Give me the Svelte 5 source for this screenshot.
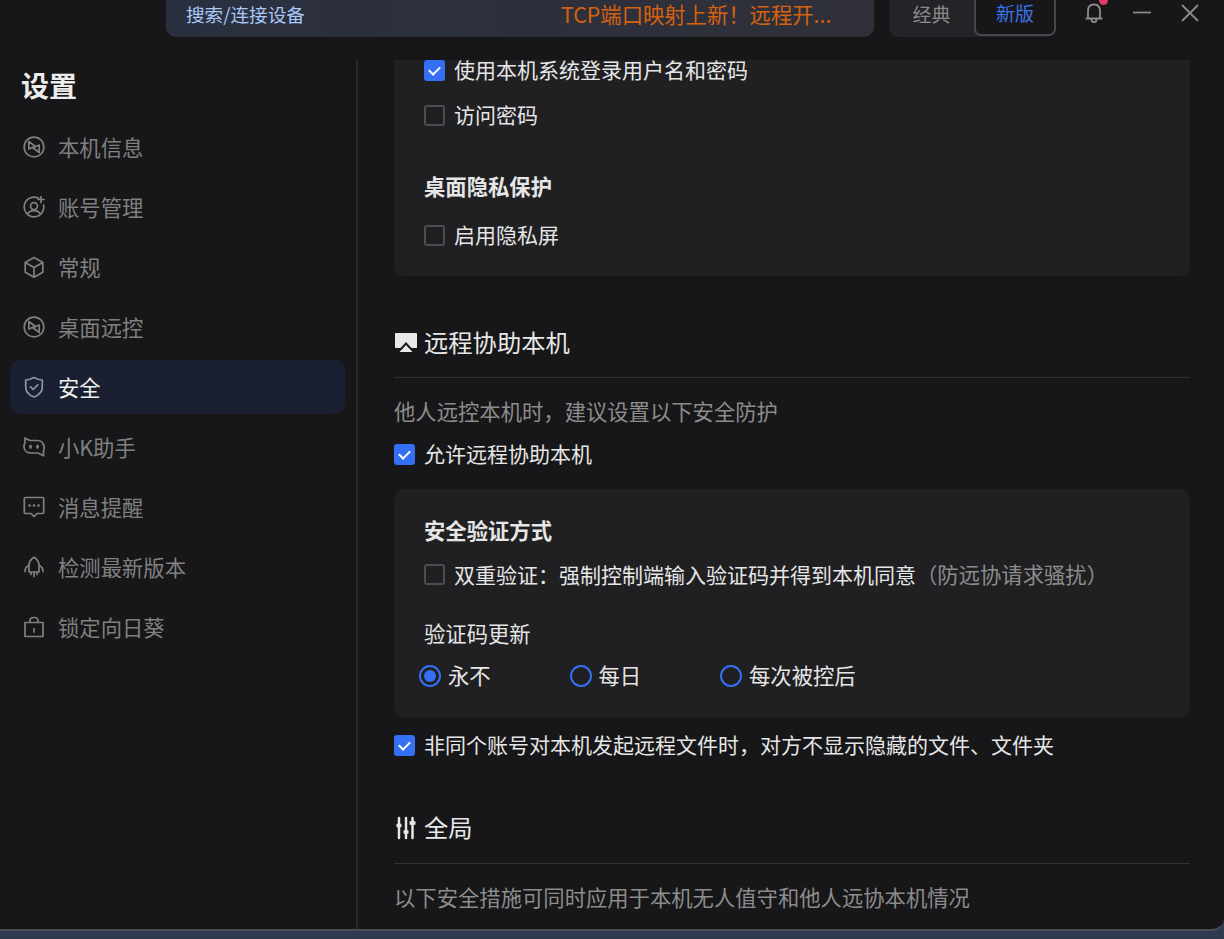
<script>
  const logo = "M11 1.200c5.600 0 9.800 4.200 9.800 9.800s-4.200 9.800-9.800 9.800S1.200 16.600 1.200 11 5.400 1.200 11 1.200ZM5.800 5.500v7.500l6.400-2.800ZM16.200 16.500V9l-6.400 2.800Z";
  const menu = [
    { label: "本机信息", d: logo },
    { label: "账号管理", d: "M15.500 2.300A9.800 9.800 0 1 0 20.600 9M11 6.600a3.500 3.500 0 1 1 0 7a3.500 3.500 0 1 1 0-7ZM4.600 18c1.200-2.400 3.500-3.400 6.400-3.400s5.200 1 6.400 3.400M18 .5v6M15 3.500h6" },
    { label: "常规", d: "M11 1.500l8.800 5v9.800l-8.800 5l-8.800-5V6.500ZM2.200 6.500l8.800 5l8.800-5M11 11.500v9.800" },
    { label: "桌面远控", d: logo },
    { label: "安全", d: "M11 1.500c2.600 1.500 5.200 2.300 8.300 2.500v7c0 5-3.400 8.200-8.300 10c-4.900-1.800-8.300-5-8.300-10V4c3.100-.2 5.700-1 8.300-2.500ZM7.500 10.800l2.700 2.700l4.500-4.700", active: true },
    { label: "小K助手", d: "M2 2v4.500C1.300 7.700 1 9 1 10.500c0 4 2.700 6.500 6.500 6.500h7.500l5.500 2.800V15c.6-1.200 .8-2.800 .5-4.500C20.400 6.800 18 4.500 14.500 4.500h-7C5.500 4.500 4 3 2 2Z", dots: "M7.500 10v1.500M14.500 10v1.500" },
    { label: "消息提醒", d: "M2.500 1.500h17c.7 0 1.200 .5 1.200 1.200v13.600c0 .7-.5 1.200-1.200 1.200h-5.500L11 20.500l-3-3h-5.500c-.7 0-1.200-.5-1.200-1.200V2.700c0-.7 .5-1.200 1.200-1.200Z", dots: "M6.500 9.500h.1M11 9.500h.1M15.500 9.500h.1" },
    { label: "检测最新版本", d: "M11 1.200c3.600 2 5 5 5 8.300v6.500H6V9.500c0-3.300 1.400-6.300 5-8.300ZM6 9.500C3.500 10.500 2 12.500 2 15.500M16 9.500c2.500 1 4 3 4 6M8 16v2.500M11 16v4.500M14 16v2.500" },
    { label: "锁定向日葵", d: "M2 6.500h18v14H2ZM7 6.500V4.500C7 2.500 8.500 1.500 11 1.500s4 1 4 3v2M11 12.500v3.500" },
  ];
</script>

<div class="window">
  <header class="topbar">
    <div class="search">
      <span class="search-text">搜索/连接设备</span>
      <span class="promo">TCP端口映射上新！远程开...</span>
    </div>
    <div class="tabs">
      <span class="tab">经典</span>
      <span class="tab current">新版</span>
    </div>
    <div class="bell">
      <svg width="22" height="24" viewBox="0 0 22 24" fill="none" stroke="#8a8a8a" stroke-width="1.800">
        <path d="M5 17V10c0-4 2.400-6.500 6-6.500s6 2.500 6 6.500v7M2.500 17.500h17M8.500 18.500c0 3.500 5 3.500 5 0" />
      </svg>
      <i class="dot"></i>
    </div>
    <div class="win-btn">
      <svg width="18" height="18" viewBox="0 0 18 18" stroke="#8a8a8a" stroke-width="1.800"><path d="M0 8.500h18" /></svg>
    </div>
    <div class="win-btn">
      <svg width="18" height="18" viewBox="0 0 18 18" stroke="#8a8a8a" stroke-width="1.800"><path d="M1 1l16 16M17 1L1 17" /></svg>
    </div>
  </header>

  <div class="body">
    <aside class="sidebar">
      <h1>设置</h1>
      <nav>
        {#each menu as item}
          <div class="item" class:active={item.active}>
            <svg width="22" height="22" viewBox="0 0 22 22" fill="none" stroke="currentColor" stroke-width="1.700" stroke-linecap="round" stroke-linejoin="round">
              <path d={item.d} />
              {#if item.dots}<path d={item.dots} stroke-width="2.600" />{/if}
            </svg>
            <span>{item.label}</span>
          </div>
        {/each}
      </nav>
    </aside>

    <main class="content">
      <section class="card first">
        <label class="row"><i class="check on"></i><span>使用本机系统登录用户名和密码</span></label>
        <label class="row gap14"><i class="check"></i><span>访问密码</span></label>
        <h3 class="card-title privacy">桌面隐私保护</h3>
        <label class="row gap19"><i class="check"></i><span>启用隐私屏</span></label>
      </section>

      <h2 class="section-title remote">
        <svg width="24" height="22" viewBox="0 0 24 22" fill="#e8e8e8"><path d="M2 1h20c.6 0 1 .4 1 1v13c0 .6-.4 1-1 1h-4.500L12 10l-5.500 6H2c-.6 0-1-.4-1-1V2c0-.6 .4-1 1-1ZM12 13l6.500 7h-13Z" /></svg>
        <span>远程协助本机</span>
      </h2>
      <p class="desc">他人远控本机时，建议设置以下安全防护</p>
      <label class="row plain"><i class="check on"></i><span>允许远程协助本机</span></label>

      <section class="card verify">
        <h3 class="card-title">安全验证方式</h3>
        <label class="row gap14"><i class="check"></i><span>双重验证：强制控制端输入验证码并得到本机同意<em class="hint">（防远协请求骚扰）</em></span></label>
        <div class="sub-label">验证码更新</div>
        <div class="radios">
          <label class="radio"><i class="circle on"></i><span>永不</span></label>
          <label class="radio"><i class="circle"></i><span>每日</span></label>
          <label class="radio"><i class="circle"></i><span>每次被控后</span></label>
        </div>
      </section>

      <label class="row plain"><i class="check on"></i><span>非同个账号对本机发起远程文件时，对方不显示隐藏的文件、文件夹</span></label>

      <h2 class="section-title global">
        <svg width="24" height="24" viewBox="0 0 24 24" stroke="#e8e8e8" stroke-width="2.500" stroke-linecap="round"><path d="M5 2v20M12 2v20M18.500 2v20" /><path d="M2.500 9.500h5M9.500 16h5M15.500 7h6" stroke-width="3.500" stroke-linecap="butt" /></svg>
        <span>全局</span>
      </h2>
      <p class="desc">以下安全措施可同时应用于本机无人值守和他人远协本机情况</p>
    </main>
  </div>
</div>

<style>
  :global(body) {
    margin: 0;
    background: #2f3a50;
    font-family: "Noto Sans CJK SC", "Liberation Sans", sans-serif;
    overflow: hidden;
  }

  .window {
    width: 1224px;
    height: 931px;
    box-sizing: border-box;
    display: flex;
    flex-direction: column;
    background: #171719;
    border-bottom: 2px solid #4a4d56;
    border-bottom-right-radius: 12px;
    font-size: 21.33px;
    color: #e6e6e6;
    overflow: hidden;
  }

  .topbar {
    height: 60px;
    flex: none;
    display: flex;
    align-items: flex-start;
    padding-left: 166px;
  }

  .search {
    width: 708px;
    height: 37px;
    box-sizing: border-box;
    padding: 0 20px 11px;
    display: flex;
    align-items: center;
    background: linear-gradient(90deg, #2b3040, #2f3038);
    border-radius: 0 0 10px 10px;
    font-size: 18.6px;
  }

  .search-text {
    color: #a8c8f5;
    width: 375px;
  }

  .promo {
    color: #d6620f;
    font-size: 21.33px;
    white-space: nowrap;
  }

  .tabs {
    margin-left: 15px;
    width: 167px;
    height: 37px;
    display: flex;
    background: #232427;
    border-radius: 0 0 10px 10px;
    font-size: 19px;
  }

  .tab {
    flex: 1;
    display: flex;
    align-items: center;
    justify-content: center;
    box-sizing: border-box;
    padding-bottom: 11px;
    color: #8a8a8a;
  }

  .tab.current {
    flex: none;
    width: 82px;
    color: #3a74e8;
    background: #171719;
    border: 2px solid #46474a;
    border-top: none;
    border-radius: 0 0 7px 7px;
    margin-bottom: 1px;
    padding-bottom: 10px;
  }

  .bell {
    position: relative;
    margin-left: 27px;
    width: 22px;
    height: 24px;
  }

  .dot {
    position: absolute;
    top: -4px;
    right: -3px;
    width: 9px;
    height: 9px;
    border-radius: 50%;
    background: #e23a62;
  }

  .win-btn {
    margin-left: 27px;
    margin-top: 4px;
    width: 20px;
    display: flex;
    justify-content: center;
  }

  .win-btn + .win-btn {
    margin-left: 28px;
  }

  .body {
    flex: 1;
    display: flex;
    min-height: 0;
  }

  .sidebar {
    width: 358px;
    flex: none;
    box-sizing: border-box;
    padding: 8px 11px 0 10px;
    border-right: 2px solid #2a2b2e;
    color: #808080;
  }

  h1 {
    margin: 0 0 18px 11px;
    height: 34px;
    font-size: 28px;
    line-height: 34px;
    font-weight: 700;
    color: #ececec;
  }

  nav {
    display: flex;
    flex-direction: column;
    gap: 6px;
  }

  .item {
    height: 54px;
    display: flex;
    align-items: center;
    gap: 13px;
    padding-left: 13px;
    border-radius: 10px;
  }

  .item svg {
    flex: none;
  }

  .item span {
    margin-top: -2px;
  }

  .item.active {
    background: #1a2031;
    color: #8d93a3;
  }

  .item.active span {
    color: #f0f0f0;
  }

  .content {
    flex: 1;
    min-width: 0;
    overflow: hidden;
    padding: 0 34px 0 36px;
  }

  .card {
    background: #202023;
    padding: 0 30px;
  }

  .first {
    padding-bottom: 25px;
    border-radius: 0 0 10px 10px;
    margin-top: -5px;
  }

  .row {
    display: flex;
    align-items: center;
    height: 31px;
    gap: 9px;
    white-space: nowrap;
    font-size: 21px;
  }

  .row > span {
    margin-top: -3px;
  }

  .gap14 {
    margin-top: 14px;
  }

  .gap19 {
    margin-top: 19px;
  }

  .check {
    width: 21px;
    height: 21px;
    flex: none;
    box-sizing: border-box;
    border: 2px solid #4c4d50;
    border-radius: 3px;
    position: relative;
  }

  .check.on {
    border: none;
    background: #3570f4;
  }

  .check.on::after {
    content: "";
    position: absolute;
    left: 7px;
    top: 4px;
    width: 5px;
    height: 9px;
    border: solid #fff;
    border-width: 0 2.400px 2.400px 0;
    transform: rotate(45deg);
    transform-origin: center;
  }

  .card-title {
    margin: 0;
    height: 30px;
    line-height: 30px;
    font-size: 21.33px;
    font-weight: 700;
    color: #e6e6e6;
  }

  .privacy {
    margin-top: 40px;
  }

  .section-title {
    margin: 49px 0 0;
    display: flex;
    align-items: center;
    gap: 6px;
    height: 36px;
    font-size: 24.3px;
    font-weight: 400;
    color: #e8e8e8;
    border-bottom: 1px solid #303134;
    padding-bottom: 16px;
  }

  .section-title svg {
    flex: none;
  }

  .section-title span {
    margin-top: -4px;
  }

  .global {
    padding-bottom: 17px;
  }

  .desc {
    margin: 18px 0 0;
    height: 30px;
    line-height: 30px;
    color: #8c8c8c;
    white-space: nowrap;
  }

  .plain {
    margin-top: 13px;
    color: #e6e6e6;
  }

  .verify {
    margin-top: 19px;
    padding-top: 26px;
    padding-bottom: 26px;
    border-radius: 10px;
  }

  .hint {
    font-style: normal;
    font-size: 21.33px;
    color: #8c8c8c;
  }

  .sub-label {
    margin-top: 28px;
    height: 30px;
    line-height: 30px;
  }

  .radios {
    margin: 13px 0 0 -5px;
    display: flex;
  }

  .radio {
    width: 150.500px;
    height: 30px;
    display: flex;
    align-items: center;
    gap: 7px;
    white-space: nowrap;
  }

  .radio span {
    margin-top: -3px;
  }

  .circle {
    width: 22px;
    height: 22px;
    flex: none;
    box-sizing: border-box;
    border: 2px solid #3570f4;
    border-radius: 50%;
    position: relative;
  }

  .circle.on::after {
    content: "";
    position: absolute;
    inset: 3px;
    border-radius: 50%;
    background: #3570f4;
  }
</style>
